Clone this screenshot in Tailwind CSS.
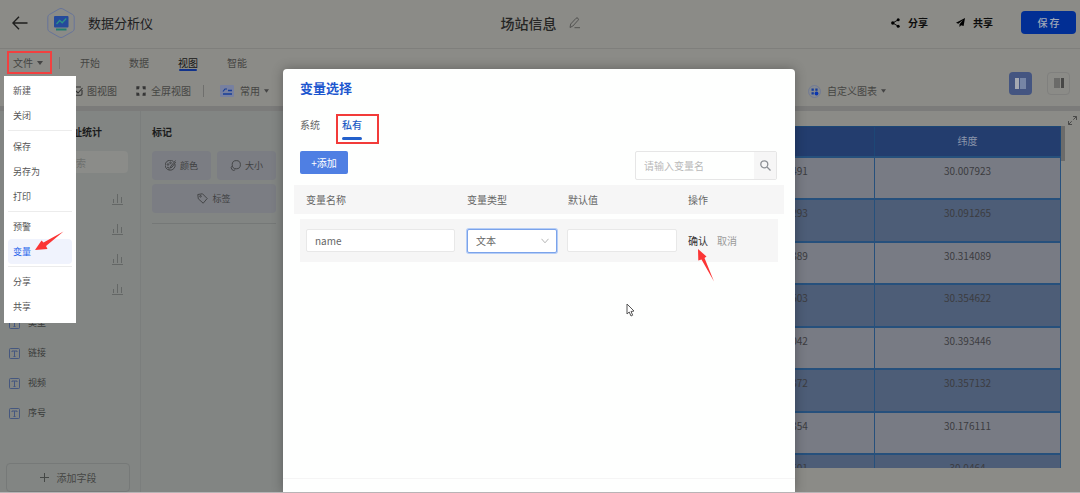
<!DOCTYPE html>
<html lang="zh-CN">
<head>
<meta charset="utf-8">
<meta name="viewport" content="width=device-width, initial-scale=1">
<title>数据分析仪</title>
<script src="https://cdn.jsdelivr.net/npm/@tailwindcss/browser@4"></script>
</head>
<body class="font-['Noto_Sans_CJK_SC','Noto_Sans',sans-serif] text-[10px] leading-4 text-[#454543]">
<div class="relative flex h-screen flex-col overflow-hidden border-b border-[#b8b4b6] bg-[#8b8b87]">

  <!-- Title bar -->
  <header class="relative flex h-[49px] shrink-0 items-center border-b border-[#7f7f7c] pr-1 pb-[3px] pl-3">
    <button aria-label="返回" class="text-[#1e1e1d]"><svg width="16" height="14" viewBox="0 0 16 14" fill="none" stroke="currentColor" stroke-width="1.4"><path d="M7 .8.9 7 7 13.2M1 7h14.5"/></svg></button>
    <svg class="ml-[18px]" width="30" height="32" viewBox="0 0 30 32" fill="none"><path d="M13.2 1.9a4 4 0 0 1 3.6 0l9.8 5.6a3 3 0 0 1 1.6 2.7v11.6a3 3 0 0 1-1.6 2.7l-9.8 5.6a4 4 0 0 1-3.6 0l-9.8-5.6a3 3 0 0 1-1.6-2.7V10.200a3 3 0 0 1 1.600-2.700z" stroke="#67749a" stroke-width="1"/><rect x="8" y="9" width="14.500" height="11.500" rx="1" fill="#254a9b"/><path d="m10.500 17 3.200-3.500 2.500 2.300 4-4.300" stroke="#2e9186" stroke-width="1.300"/><path d="M10 22.500h10.500" stroke="#237d70" stroke-width="2"/></svg>
    <h1 class="ml-3 text-[13px] leading-5 text-[#20201f]">数据分析仪</h1>
    <div class="absolute inset-x-0 flex items-center justify-center gap-3">
      <h2 class="text-[14px] leading-5 font-medium text-[#262625]">场站信息</h2>
      <button aria-label="编辑标题" class="text-[#4c4c4b]"><svg width="11" height="12" viewBox="0 0 11 12" fill="none" stroke="currentColor" stroke-width=".9"><path d="M1 10.500 1.700 7 7 1.300a1.400 1.400 0 0 1 2 0 1.400 1.400 0 0 1 0 2L3.900 9zM5.500 10.700H11"/></svg></button>
    </div>
    <div class="relative ml-auto flex items-center font-bold text-[#0c0c0c]">
      <button class="flex items-center gap-2"><svg width="9" height="10" viewBox="0 0 9 10"><path d="M7.300 1.700 1.800 5l5.500 3.300" stroke="currentColor" fill="none"/><circle cx="7.200" cy="1.800" r="1.500"/><circle cx="1.800" cy="5" r="1.700"/><circle cx="7.200" cy="8.200" r="1.500"/></svg>分享</button>
      <button class="ml-7 flex items-center gap-2"><svg width="9" height="9" viewBox="0 0 9 9"><path d="M9 0 0 4.800l2.300 1L7 2 3.500 6.300V9l1.600-1.800L7.600 8z"/></svg>共享</button>
      <button class="ml-7 h-[23px] w-[55px] rounded-sm bg-[#012e94] font-medium text-[#a2a9b8]">保 存</button>
    </div>
  </header>

  <!-- Ribbon -->
  <div class="flex h-[62px] shrink-0 items-start justify-between border-b-[5px] border-[#7b7b7a]">
    <div>
      <nav class="flex h-7 items-center pl-[13px]">
        <button class="flex items-center gap-1">文件<svg width="6" height="4" viewBox="0 0 6 4"><path d="M0 0h6L3 4z" fill="#444"/></svg></button>
        <span class="ml-4 h-3 w-px bg-[#767674]"></span>
        <div class="ml-5 flex gap-[29px]">
          <button>开始</button><button>数据</button>
          <button class="flex flex-col items-center text-[#161616]"><span class="-mb-0.5">视图</span><span class="-mb-0.5 h-0.5 w-[18px] rounded bg-[#12338b]"></span></button>
          <button>智能</button>
        </div>
      </nav>
      <div class="flex h-7 items-center pl-[73px]">
        <button class="flex items-center gap-1"><svg width="10" height="10" viewBox="0 0 10 10" fill="none" stroke="#333" stroke-width="1.100"><path d="M9 4v4a1.200 1.200 0 0 1-1.200 1.200H1V1h7M3 5l2 2 4.500-5"/></svg>图视图</button>
        <button class="ml-[19px] flex items-center gap-[5px]"><svg width="10" height="10" viewBox="0 0 10 10" fill="none" stroke="#343434" stroke-width="1.300"><path d="M1 3.500V1h2.500M6.500 1H9v2.500M9 6.500V9H6.500M3.500 9H1V6.500M1 1l2 2M9 1 7 3M9 9 7 7M1 9l2-2"/></svg>全屏视图</button>
        <span class="ml-3 h-3 w-px bg-[#6f6f6d]"></span>
        <button class="ml-4 flex items-center gap-[6px]"><svg width="14" height="12" viewBox="0 0 14 12" fill="none"><rect width="14" height="12" rx="1" fill="#7780a0"/><path d="M3 9h9M8 5.500h4" stroke="#173c96" stroke-width="1.400"/><path d="M3 6.500 5 4h2" stroke="#173c96" stroke-width="1.200"/></svg>常用<svg class="-ml-0.5" width="5" height="4" viewBox="0 0 6 4"><path d="M0 0h6L3 4z" fill="#444"/></svg></button>
      </div>
    </div>
    <div class="flex items-center pt-[18px] pr-[10px]">
      <button class="mt-4 flex items-center gap-[6px]"><svg width="13" height="13" viewBox="0 0 13 13"><circle cx="6.500" cy="6.500" r="6" fill="#858990" stroke="#6d7795" stroke-width=".8"/><g fill="#173c99"><rect x="3.500" y="3.500" width="2.300" height="2.300"/><rect x="7.300" y="3.500" width="2.300" height="2.300"/><rect x="3.500" y="7.200" width="2.300" height="2.300"/><circle cx="8.500" cy="8.500" r="1.900" fill="#0b36b0"/></g></svg>自定义图表<svg class="-ml-0.5" width="5" height="4" viewBox="0 0 6 4"><path d="M0 0h6L3 4z" fill="#444"/></svg></button>
      <button aria-label="左侧面板" class="ml-[123px] flex h-[23px] w-[23px] items-center justify-center rounded-sm bg-[#445581]"><svg width="11" height="11"><path fill="#a5a9b2" d="M0 0h4v11H0z"/><path fill="#7685a5" d="M5 0h6v11H5z"/></svg></button>
      <button aria-label="右侧面板" class="ml-[15px] flex h-[23px] w-[23px] items-center justify-center rounded-sm border border-[#80807e]"><svg width="10" height="10"><path fill="#6b6b69" d="M0 0h6v10H0z"/><path fill="#474746" d="M7 0h3v10H7z"/></svg></button>
    </div>
  </div>

  <!-- Workspace -->
  <div class="flex min-h-0 flex-1">
    <aside class="flex w-[141px] shrink-0 flex-col border-r border-[#7b7e7d] bg-[#828583] pt-[13px]">
      <h3 class="pl-[62px] font-bold text-[#1b1c1c]">地址统计</h3>
      <input aria-label="搜索字段" placeholder="搜索" class="mt-[11px] ml-[6px] h-[22px] w-[122px] rounded-sm bg-[#8b8c89] pl-[60px] placeholder:text-[#6e706e]">
      <ul class="mt-[11px] pr-[17px] text-[#646766]">
        <li class="flex h-[30px] items-center justify-end"><svg width="11" height="12" viewBox="0 0 11 12" fill="none" stroke="currentColor"><path d="M0 11.500h11M1.500 6v4M5.500 1v9M9.500 4v6"/></svg></li>
        <li class="flex h-[30px] items-center justify-end"><svg width="11" height="12" viewBox="0 0 11 12" fill="none" stroke="currentColor"><path d="M0 11.500h11M1.500 6v4M5.500 1v9M9.500 4v6"/></svg></li>
        <li class="flex h-[30px] items-center justify-end"><svg width="11" height="12" viewBox="0 0 11 12" fill="none" stroke="currentColor"><path d="M0 11.500h11M1.500 6v4M5.500 1v9M9.500 4v6"/></svg></li>
        <li class="flex h-[30px] items-center justify-end"><svg width="11" height="12" viewBox="0 0 11 12" fill="none" stroke="currentColor"><path d="M0 11.500h11M1.500 6v4M5.500 1v9M9.500 4v6"/></svg></li>
      </ul>
      <ul class="mt-1 pl-[9px] text-[9px] text-[#383a39]">
        <li class="flex h-[30px] items-center gap-2"><svg width="11" height="11" viewBox="0 0 11 11" fill="none" stroke="#45577f"><rect x=".5" y=".5" width="10" height="10" rx="1"/><path d="M3 4V3h5v1M5.500 3v5.500M4.500 8.500h2"/></svg>类型</li>
        <li class="flex h-[30px] items-center gap-2"><svg width="11" height="11" viewBox="0 0 11 11" fill="none" stroke="#45577f"><rect x=".5" y=".5" width="10" height="10" rx="1"/><path d="M3 4V3h5v1M5.500 3v5.500M4.500 8.500h2"/></svg>链接</li>
        <li class="flex h-[30px] items-center gap-2"><svg width="11" height="11" viewBox="0 0 11 11" fill="none" stroke="#45577f"><rect x=".5" y=".5" width="10" height="10" rx="1"/><path d="M3 4V3h5v1M5.500 3v5.500M4.500 8.500h2"/></svg>视频</li>
        <li class="flex h-[30px] items-center gap-2"><svg width="11" height="11" viewBox="0 0 11 11" fill="none" stroke="#45577f"><rect x=".5" y=".5" width="10" height="10" rx="1"/><path d="M3 4V3h5v1M5.500 3v5.500M4.500 8.500h2"/></svg>序号</li>
      </ul>
      <button class="mx-[6px] mt-auto flex h-[29px] w-[124px] items-center justify-center gap-2 rounded-sm border border-[#767978]"><svg width="9" height="9" viewBox="0 0 9 9" stroke="#454846"><path d="M4.500 0v9M0 4.500h9"/></svg>添加字段</button>
    </aside>

    <section class="w-[147px] shrink-0 bg-[#828583] pt-[13px] pr-3 pl-[11px]">
      <h3 class="font-bold text-[#1b1c1c]">标记</h3>
      <div class="mt-[11px] grid w-[124px] grid-cols-2 gap-x-[6px] gap-y-1 text-[9px] text-[#3f4142]">
        <button class="flex h-[29px] items-center justify-center gap-1 rounded-sm bg-[#7b7d83]"><svg width="11" height="11" viewBox="0 0 11 11" fill="none" stroke="currentColor" stroke-width=".9"><path d="M8.500 1.500A5 5 0 1 0 10 4M2 7.500c1.500-1 2.500.500 2 2.500M10.500.500 6 6l-1 2 2-.800L10.700 2"/><circle cx="3" cy="4.500" r=".8"/><circle cx="5.500" cy="2.800" r=".8"/></svg>颜色</button>
        <button class="flex h-[29px] items-center justify-center gap-1 rounded-sm bg-[#7b7d83]"><svg width="11" height="11" viewBox="0 0 11 11" fill="none" stroke="currentColor" stroke-width=".9"><circle cx="6.300" cy="4.700" r="4.100"/><path d="M2.200 6a2.300 2.300 0 1 0 3 3.800"/></svg>大小</button>
        <button class="col-span-2 flex h-[29px] items-center justify-center gap-1 rounded-sm bg-[#7b7d83]"><svg width="11" height="11" viewBox="0 0 11 11" fill="none" stroke="currentColor" stroke-width=".9"><path d="M.800 1.500 5.500.800l4.700 4.700-4 4.700L1.300 5.800z" stroke-linejoin="round"/><circle cx="3.500" cy="3.300" r=".8"/></svg>标签</button>
      </div>
      <hr class="mt-[10px] border-[#757877]">
    </section>

    <main class="flex min-w-0 flex-1 flex-col">
      <div class="flex h-[15px] shrink-0 items-center justify-end pt-1 pr-[3px]"><button aria-label="放大"><svg width="9" height="9" viewBox="0 0 9 9" fill="none" stroke="#4a4a49"><path d="M5 .500h3.500V4M8.500.500 5.300 3.700M4 8.500H.500V5M.500 8.500l3.200-3.200"/></svg></button></div>
      <div class="flex h-[342px] min-h-0 overflow-hidden pr-[15px]">
        <table class="h-[372px] flex-1 table-fixed border-collapse text-center text-[10px] text-[#3c3c40]">
          <colgroup><col><col class="w-[186px]"><col class="w-[186px]"></colgroup>
          <thead><tr class="h-[30px] bg-[#233d6e] text-[#8d97ab]"><th></th><th class="border border-[#1d4776] font-normal">经度</th><th class="border border-[#1d4776] font-normal">纬度</th></tr></thead>
          <tbody class="align-top *:*:border-x *:*:border-y-2 *:*:border-[#26507c] *:*:pt-[5px] *:odd:bg-[#787b84] *:even:bg-[#4d5d77]">
            <tr><td></td><td>120.582491</td><td>30.007923</td></tr>
            <tr><td></td><td>120.493293</td><td>30.091265</td></tr>
            <tr><td></td><td>120.265389</td><td>30.314089</td></tr>
            <tr><td></td><td>120.126503</td><td>30.354622</td></tr>
            <tr><td></td><td>120.087042</td><td>30.393446</td></tr>
            <tr><td></td><td>120.264372</td><td>30.357132</td></tr>
            <tr><td></td><td>120.154354</td><td>30.176111</td></tr>
            <tr><td></td><td>120.231501</td><td>30.0464</td></tr>
          </tbody>
        </table>
        <div class="h-[35px] w-1 shrink-0 bg-[#6b6b6a]"></div>
      </div>
    </main>
  </div>

  <!-- File menu -->
  <div role="menu" class="absolute top-[76px] left-1 flex w-[72px] flex-col bg-white px-1 pt-[2px] pb-[4px] text-[9px] text-[#555] *:[button]:h-[25px] *:[button]:pl-[5px] *:[button]:text-left">
    <button>新建</button><button>关闭</button>
    <hr class="mt-0.5 mb-[3px] border-[#ececec]">
    <button>保存</button><button>另存为</button><button>打印</button>
    <hr class="mt-0.5 mb-[2px] border-[#ececec]">
    <button>预警</button><button class="rounded-sm bg-[#f0f3fd] text-[#2563eb]">变量</button>
    <hr class="mt-0.5 mb-[2px] border-[#ececec]">
    <button>分享</button><button>共享</button>
  </div>

  <!-- Variable dialog -->
  <div class="pointer-events-none absolute inset-0 flex justify-center pt-[69px] pr-[2px]">
    <div role="dialog" aria-labelledby="dlg" class="pointer-events-auto relative flex w-[512px] flex-col rounded-t-sm bg-[#fefffe] px-[11px] text-[#666] shadow-[0_0_12px_rgba(0,0,0,0.3)]">
      <h2 id="dlg" class="mt-[9px] pl-[6px] text-[13px] leading-5 font-bold text-[#1d57cf]">变量选择</h2>
      <div role="tablist" class="mt-[19px] flex h-6 gap-[22px] pl-[6px]">
        <button role="tab" class="self-start">系统</button>
        <button role="tab" aria-selected="true" class="self-start font-medium text-[#1d5bc4]"><span class="block">私有</span><span class="mt-[4px] block h-[3px] rounded bg-[#2360cb]"></span></button>
      </div>
      <div class="mt-[10px] flex items-start justify-between pr-[7px] pl-[6px]">
        <button class="h-[23px] w-12 rounded-xs bg-[#4f7fe3] text-white">+添加</button>
        <div class="flex h-[29px] w-[142px] rounded-xs border border-[#e6e6e6]">
          <input aria-label="变量名" placeholder="请输入变量名" class="min-w-0 flex-1 pl-2 placeholder:text-[#b9b9b9]">
          <button aria-label="搜索" class="flex w-[22px] items-center justify-center bg-[#f6f6f6]"><svg width="11" height="11" viewBox="0 0 11 11" fill="none" stroke="#8b8f94" stroke-width="1.300"><circle cx="4.300" cy="4.300" r="3.500"/><path d="m7 7 3.500 3.500"/></svg></button>
        </div>
      </div>
      <table class="mt-[5px] w-full table-fixed border-collapse text-left">
        <colgroup><col class="w-[167px]"><col class="w-[101px]"><col class="w-[120px]"><col></colgroup>
        <thead><tr class="h-[29px] bg-[#f6f6f6] *:font-normal"><th class="pl-3">变量名称</th><th class="pl-[6px]">变量类型</th><th class="pl-[6px]">默认值</th><th class="pl-[6px]">操作</th></tr></thead>
        <tbody><tr>
          <td class="pt-[5px] pl-[6px]"><div class="flex h-[43px] items-center bg-[#f6f6f6] px-[6px]"><input aria-label="变量名称" value="name" class="h-[23px] w-full rounded-xs border border-[#e8e8e8] bg-white pl-2 text-[#666]"></div></td>
          <td class="pt-[5px]"><div class="relative flex h-[43px] items-center bg-[#f6f6f6] pr-[5px] pl-[6px]"><select aria-label="变量类型" class="h-6 w-full appearance-none rounded-xs border border-[#7ba3ea] bg-white pl-2 shadow-[0_0_0_1px_#b5cdf6]"><option>文本</option></select><svg class="pointer-events-none absolute right-[13px]" width="8" height="6" viewBox="0 0 8 6" fill="none" stroke="#b5b5b5"><path d="m.500.800 3.500 4 3.500-4"/></svg></div></td>
          <td class="pt-[5px]"><div class="flex h-[43px] items-center bg-[#f6f6f6] pr-[5px] pl-[5px]"><input aria-label="默认值" class="h-[23px] w-full rounded-xs border border-[#e8e8e8] bg-white pl-2"></div></td>
          <td class="pt-[5px] pr-[6px]"><div class="flex h-[43px] items-center gap-[9px] bg-[#f6f6f6] pl-[6px]"><button class="text-[#333]">确认</button><button class="text-[#9a9a9a]">取消</button></div></td>
        </tr></tbody>
      </table>
      <hr class="-mx-[11px] mt-auto mb-[13px] border-[#f5f5f5]">

      <!-- Callouts over the dialog -->
      <div class="absolute top-[45px] left-[53px] h-[30px] w-[43px] border-2 border-[#f23b39]"></div>
      <svg class="absolute top-[180px] left-[415px]" width="16" height="33" viewBox="0 0 16 33"><path fill="#fb3535" d="M0 0 8.500 7.500 6.500 9 16 32.500 3.500 10.500.300 11.500z"/></svg>
      <svg class="absolute top-[234px] left-[343px]" width="9" height="14" viewBox="0 0 9 14"><path d="M1 1v10l2.200-2 1.800 4 1.700-.800L5 8.500l3-.500z" fill="#fff" stroke="#555"/></svg>
    </div>
  </div>

  <!-- Callouts over the file menu -->
  <div class="absolute top-[51px] left-[7px] h-[23px] w-[45px] border-2 border-[#f24040]"></div>
  <svg class="absolute top-[231px] left-[35px]" width="29" height="20" viewBox="0 0 29 20"><path fill="#fb3535" d="M0 19 6.500 9.500 8.500 11.500 28.500.500 11 15 12.500 18z"/></svg>
</div>
</body>
</html>
